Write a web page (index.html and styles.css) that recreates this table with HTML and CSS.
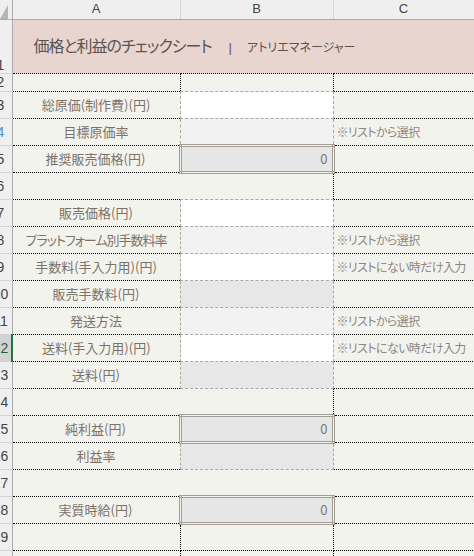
FILE: index.html
```html
<!DOCTYPE html>
<html lang="ja">
<head>
<meta charset="utf-8">
<title>価格と利益のチェックシート</title>
<link rel="stylesheet" href="styles.css">
</head>
<body>
<table class="sheet">
  <colgroup>
    <col class="col-rh">
    <col class="col-a">
    <col class="col-b">
    <col class="col-c">
  </colgroup>
  <thead>
    <tr class="hdr">
      <th class="corner"><svg class="tri" width="8" height="16" viewBox="0 0 8 16"><polygon points="0,16 8,2 8,16" fill="#b4b4b4"/></svg></th>
      <th class="ch">A</th>
      <th class="ch">B</th>
      <th class="ch">C</th>
    </tr>
  </thead>
  <tbody>
    <tr class="r-title">
      <th class="rh rh-bottom"><div class="rhw"><span>1</span></div></th>
      <td colspan="3" class="title"><span class="t-main">価格と利益のチェックシート</span><span class="t-sep">|</span><span class="t-sub">アトリエマネージャー</span></td>
    </tr>
    <tr class="r-short">
      <th class="rh"><div class="rhw"><span>2</span></div></th>
      <td class="a"></td><td class="b"></td><td class="c"></td>
    </tr>
    <tr>
      <th class="rh"><div class="rhw"><span>3</span></div></th>
      <td class="a">総原価(制作費)(円)</td><td class="b in"></td><td class="c"></td>
    </tr>
    <tr>
      <th class="rh"><div class="rhw"><span class="blue">4</span></div></th>
      <td class="a">目標原価率</td><td class="b sel"></td><td class="c note">※リストから選択</td>
    </tr>
    <tr>
      <th class="rh"><div class="rhw"><span>5</span></div></th>
      <td class="a">推奨販売価格(円)</td><td class="b box">0</td><td class="c"></td>
    </tr>
    <tr>
      <th class="rh"><div class="rhw"><span>6</span></div></th>
      <td class="a nr"></td><td class="b"></td><td class="c"></td>
    </tr>
    <tr>
      <th class="rh"><div class="rhw"><span>7</span></div></th>
      <td class="a">販売価格(円)</td><td class="b in"></td><td class="c"></td>
    </tr>
    <tr>
      <th class="rh"><div class="rhw"><span>8</span></div></th>
      <td class="a tight">プラットフォーム別手数料率</td><td class="b sel"></td><td class="c note">※リストから選択</td>
    </tr>
    <tr>
      <th class="rh"><div class="rhw"><span>9</span></div></th>
      <td class="a">手数料(手入力用)(円)</td><td class="b in"></td><td class="c note">※リストにない時だけ入力</td>
    </tr>
    <tr>
      <th class="rh"><div class="rhw"><span>10</span></div></th>
      <td class="a">販売手数料(円)</td><td class="b calc"></td><td class="c"></td>
    </tr>
    <tr>
      <th class="rh"><div class="rhw"><span>11</span></div></th>
      <td class="a">発送方法</td><td class="b sel"></td><td class="c note">※リストから選択</td>
    </tr>
    <tr>
      <th class="rh active"><div class="rhw"><span>12</span></div></th>
      <td class="a">送料(手入力用)(円)</td><td class="b in"></td><td class="c note">※リストにない時だけ入力</td>
    </tr>
    <tr>
      <th class="rh"><div class="rhw"><span>13</span></div></th>
      <td class="a">送料(円)</td><td class="b calc"></td><td class="c"></td>
    </tr>
    <tr>
      <th class="rh"><div class="rhw"><span>14</span></div></th>
      <td class="a nr"></td><td class="b"></td><td class="c"></td>
    </tr>
    <tr>
      <th class="rh"><div class="rhw"><span>15</span></div></th>
      <td class="a">純利益(円)</td><td class="b box">0</td><td class="c"></td>
    </tr>
    <tr>
      <th class="rh"><div class="rhw"><span>16</span></div></th>
      <td class="a">利益率</td><td class="b calc"></td><td class="c"></td>
    </tr>
    <tr>
      <th class="rh"><div class="rhw"><span>17</span></div></th>
      <td class="a nr"></td><td class="b nr"></td><td class="c"></td>
    </tr>
    <tr>
      <th class="rh"><div class="rhw"><span>18</span></div></th>
      <td class="a">実質時給(円)</td><td class="b box">0</td><td class="c"></td>
    </tr>
    <tr>
      <th class="rh"><div class="rhw"><span>19</span></div></th>
      <td class="a"></td><td class="b"></td><td class="c"></td>
    </tr>
    <tr class="r-tail">
      <th class="rh"><div class="rhw"><span>20</span></div></th>
      <td class="a"></td><td class="b"></td><td class="c"></td>
    </tr>
  </tbody>
</table>
</body>
</html>
```

FILE: styles.css
```css
html, body {
  margin: 0;
  padding: 0;
  background: #f3f3ee;
  overflow: hidden;
}

.sheet {
  border-collapse: collapse;
  table-layout: fixed;
  width: 474px;
  font-family: "Noto Sans CJK JP", "Noto Sans", sans-serif;
  font-feature-settings: "palt";
}

.col-rh { width: 12px; }
.col-a { width: 168px; }
.col-b { width: 153px; }
.col-c { width: 141px; }

.sheet th, .sheet td {
  padding: 0;
  overflow: hidden;
  white-space: nowrap;
  line-height: 16px;
}

/* column header */
.hdr { height: 19px; }
.sheet .hdr th {
  background: #efefef;
  border-bottom: 1px solid #ababab;
  border-right: 1px solid #d4d4d4;
  font-family: "Liberation Sans", Arial, sans-serif;
  font-weight: normal;
  font-size: 13px;
  color: #444;
  text-align: center;
  vertical-align: middle;
}
.sheet .hdr th.corner {
  border-right: 1px solid #ababab;
  text-align: left;
  vertical-align: bottom;
}
.tri { display: block; }

/* row header */
.sheet th.rh {
  background: #efefef;
  border-right: 1px solid #ababab;
  border-bottom: 1px solid #d4d4d4;
  font-family: "Liberation Sans", Arial, sans-serif;
  font-weight: normal;
  font-size: 14px;
  line-height: 14px;
  color: #444;
  vertical-align: middle;
}
.sheet th.rh.rh-bottom {
  vertical-align: bottom;
  padding-bottom: 1px;
}
.rhw {
  width: 11px;
  overflow: hidden;
}
.rhw span {
  display: block;
  width: 21px;
  margin-left: -10px;
  text-align: center;
}
.rhw span.blue { color: #4f8fd6; }
.sheet th.rh.active {
  background: #d3d3d3;
  border-right: 2px solid #217346;
}
.rh.active span { color: #1f5f3a; }

/* title */
.r-title { height: 54px; }
.sheet td.title {
  background: #e8d5cf;
  border-right: 1px dotted #000;
  border-bottom: 1px dotted #000;
  padding-left: 21px;
  color: #5c5450;
  vertical-align: middle;
}
.t-main {
  display: inline-block;
  font-size: 16px;
  letter-spacing: -1px;
}
.t-sep {
  display: inline-block;
  margin: 0 15px 0 17px;
  font-family: "Liberation Sans", Arial, sans-serif;
  font-size: 13px;
}
.t-sub {
  display: inline-block;
  font-size: 12px;
}

/* body rows */
tbody tr { height: 27px; }
tbody tr.r-short { height: 18px; }
tbody tr.r-tail { height: 27px; }

.a {
  border-right: 1px dotted #000;
  border-bottom: 1px dotted #000;
  text-align: center;
  font-size: 13px;
  color: #7d7268;
}
.a.tight { letter-spacing: -1px; }
.a.nr { border-right: none; }
.b {
  border-right: 1px dotted #000;
  border-bottom: 1px dotted #000;
}
.b.nr { border-right: none; }
.c {
  border-right: 1px dotted #000;
  border-bottom: 1px dotted #000;
}
.sheet td.note {
  font-size: 12px;
  letter-spacing: -0.6px;
  color: #8c8782;
  padding-left: 3px;
}

.in {
  background: #fff;
  border: 1px dashed #a8a8a8;
}
.sel {
  background: #f2f2f2;
  border: 1px dashed #a8a8a8;
}
.calc {
  background: #e7e7e7;
  border: 1px dashed #a8a8a8;
}
.sheet td.box {
  background: #e6e6e6;
  border: 3px double #a39c94;
  text-align: right;
  padding-right: 4px;
  font-size: 13px;
  color: #777;
}
```
